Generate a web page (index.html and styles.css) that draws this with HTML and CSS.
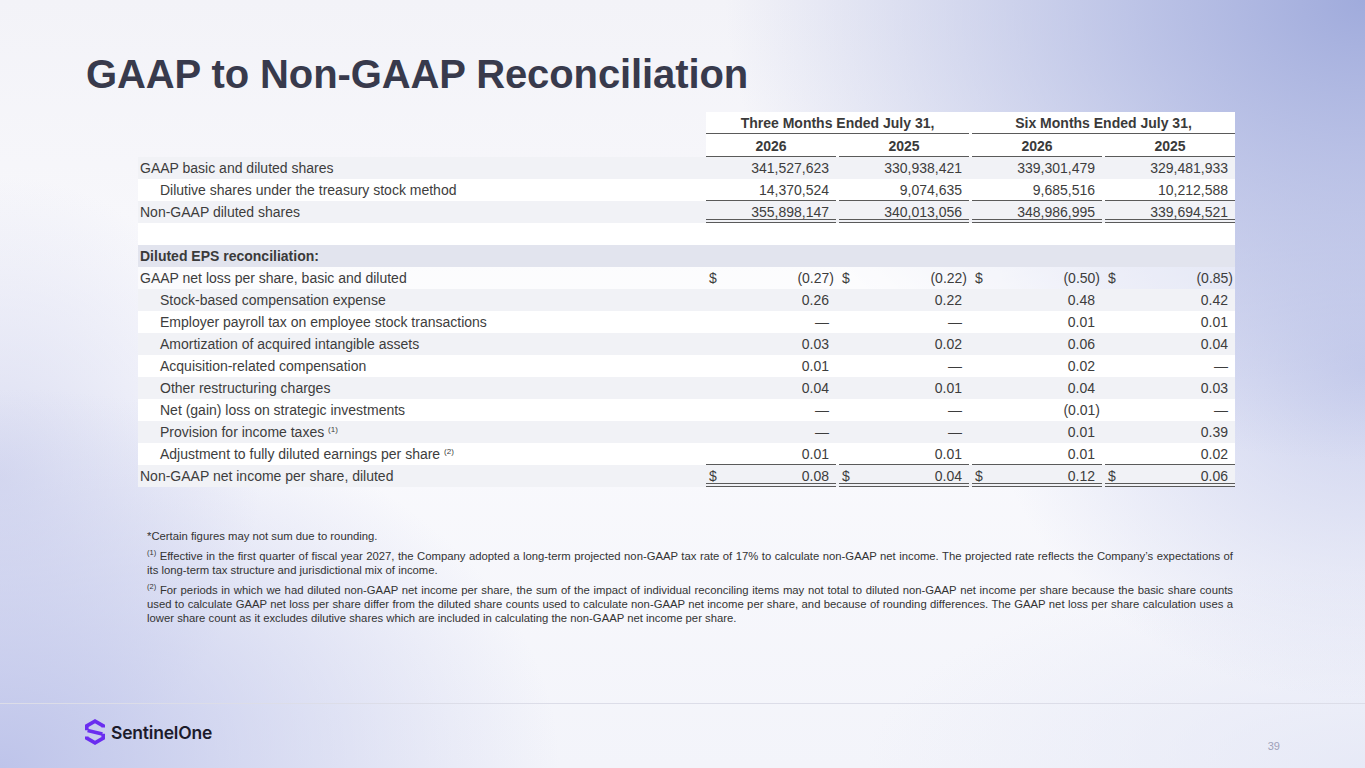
FILE: index.html
```html
<!DOCTYPE html>
<html>
<head>
<meta charset="utf-8">
<link rel="stylesheet" href="styles.css">
</head>
<body>
<div class="slide">
  <h1 class="title">GAAP to Non-GAAP Reconciliation</h1>
  <table class="recon">
    <colgroup>
      <col class="c-label"><col class="c-num"><col class="c-num"><col class="c-num"><col class="c-num">
    </colgroup>
    <tr class="hrow h1r">
      <td class="lbl-empty"></td>
      <td class="hcell first" colspan="2"><div class="hv line">Three Months Ended July 31,</div></td>
      <td class="hcell" colspan="2"><div class="hv line">Six Months Ended July 31,</div></td>
    </tr>
    <tr class="hrow h2r">
      <td class="lbl-empty"></td>
      <td class="hcell first"><div class="hv line">2026</div></td>
      <td class="hcell"><div class="hv line">2025</div></td>
      <td class="hcell"><div class="hv line">2026</div></td>
      <td class="hcell"><div class="hv line">2025</div></td>
    </tr>
    <tr class="r gray">
      <td class="lbl">GAAP basic and diluted shares</td>
      <td class="num"><div class="v">341,527,623</div></td>
      <td class="num"><div class="v">330,938,421</div></td>
      <td class="num"><div class="v">339,301,479</div></td>
      <td class="num"><div class="v">329,481,933</div></td>
    </tr>
    <tr class="r white">
      <td class="lbl ind">Dilutive shares under the treasury stock method</td>
      <td class="num"><div class="v line">14,370,524</div></td>
      <td class="num"><div class="v line">9,074,635</div></td>
      <td class="num"><div class="v line">9,685,516</div></td>
      <td class="num"><div class="v line">10,212,588</div></td>
    </tr>
    <tr class="r gray">
      <td class="lbl">Non-GAAP diluted shares</td>
      <td class="num"><div class="v dbl">355,898,147</div></td>
      <td class="num"><div class="v dbl">340,013,056</div></td>
      <td class="num"><div class="v dbl">348,986,995</div></td>
      <td class="num"><div class="v dbl">339,694,521</div></td>
    </tr>
    <tr class="r white">
      <td class="lbl"></td><td class="num"></td><td class="num"></td><td class="num"></td><td class="num"></td>
    </tr>
    <tr class="r section">
      <td class="lbl bold">Diluted EPS reconciliation:</td>
      <td class="num"></td><td class="num"></td><td class="num"></td><td class="num"></td>
    </tr>
    <tr class="r soft">
      <td class="lbl">GAAP net loss per share, basic and diluted</td>
      <td class="num"><div class="v cur"><span class="d">$</span><span class="p">(0.27)</span></div></td>
      <td class="num"><div class="v cur"><span class="d">$</span><span class="p">(0.22)</span></div></td>
      <td class="num"><div class="v cur"><span class="d">$</span><span class="p">(0.50)</span></div></td>
      <td class="num"><div class="v cur"><span class="d">$</span><span class="p">(0.85)</span></div></td>
    </tr>
    <tr class="r gray">
      <td class="lbl ind">Stock-based compensation expense</td>
      <td class="num"><div class="v">0.26</div></td>
      <td class="num"><div class="v">0.22</div></td>
      <td class="num"><div class="v">0.48</div></td>
      <td class="num"><div class="v">0.42</div></td>
    </tr>
    <tr class="r white">
      <td class="lbl ind">Employer payroll tax on employee stock transactions</td>
      <td class="num"><div class="v">—</div></td>
      <td class="num"><div class="v">—</div></td>
      <td class="num"><div class="v">0.01</div></td>
      <td class="num"><div class="v">0.01</div></td>
    </tr>
    <tr class="r gray">
      <td class="lbl ind">Amortization of acquired intangible assets</td>
      <td class="num"><div class="v">0.03</div></td>
      <td class="num"><div class="v">0.02</div></td>
      <td class="num"><div class="v">0.06</div></td>
      <td class="num"><div class="v">0.04</div></td>
    </tr>
    <tr class="r white">
      <td class="lbl ind">Acquisition-related compensation</td>
      <td class="num"><div class="v">0.01</div></td>
      <td class="num"><div class="v">—</div></td>
      <td class="num"><div class="v">0.02</div></td>
      <td class="num"><div class="v">—</div></td>
    </tr>
    <tr class="r gray">
      <td class="lbl ind">Other restructuring charges</td>
      <td class="num"><div class="v">0.04</div></td>
      <td class="num"><div class="v">0.01</div></td>
      <td class="num"><div class="v">0.04</div></td>
      <td class="num"><div class="v">0.03</div></td>
    </tr>
    <tr class="r white">
      <td class="lbl ind">Net (gain) loss on strategic investments</td>
      <td class="num"><div class="v">—</div></td>
      <td class="num"><div class="v">—</div></td>
      <td class="num"><div class="v"><span class="p">(0.01)</span></div></td>
      <td class="num"><div class="v">—</div></td>
    </tr>
    <tr class="r gray">
      <td class="lbl ind">Provision for income taxes <sup>(1)</sup></td>
      <td class="num"><div class="v">—</div></td>
      <td class="num"><div class="v">—</div></td>
      <td class="num"><div class="v">0.01</div></td>
      <td class="num"><div class="v">0.39</div></td>
    </tr>
    <tr class="r white">
      <td class="lbl ind">Adjustment to fully diluted earnings per share <sup>(2)</sup></td>
      <td class="num"><div class="v line">0.01</div></td>
      <td class="num"><div class="v line">0.01</div></td>
      <td class="num"><div class="v line">0.01</div></td>
      <td class="num"><div class="v line">0.02</div></td>
    </tr>
    <tr class="r gray">
      <td class="lbl">Non-GAAP net income per share, diluted</td>
      <td class="num"><div class="v cur dbl"><span class="d">$</span><span>0.08</span></div></td>
      <td class="num"><div class="v cur dbl"><span class="d">$</span><span>0.04</span></div></td>
      <td class="num"><div class="v cur dbl"><span class="d">$</span><span>0.12</span></div></td>
      <td class="num"><div class="v cur dbl"><span class="d">$</span><span>0.06</span></div></td>
    </tr>
  </table>

  <div class="notes">
    <p>*Certain figures may not sum due to rounding.</p>
    <p><span class="fn">(1)</span> Effective in the first quarter of fiscal year 2027, the Company adopted a long-term projected non-GAAP tax rate of 17% to calculate non-GAAP net income. The projected rate reflects the Company’s expectations of its long-term tax structure and jurisdictional mix of income.</p>
    <p><span class="fn">(2)</span> For periods in which we had diluted non-GAAP net income per share, the sum of the impact of individual reconciling items may not total to diluted non-GAAP net income per share because the basic share counts used to calculate GAAP net loss per share differ from the diluted share counts used to calculate non-GAAP net income per share, and because of rounding differences. The GAAP net loss per share calculation uses a lower share count as it excludes dilutive shares which are included in calculating the non-GAAP net income per share.</p>
  </div>

  <div class="footer">
    <div class="brand">
      <svg class="mark" viewBox="0 0 20 26" width="20" height="26" aria-hidden="true">
        <g fill="none" stroke="#6a2df0" stroke-width="3.6" stroke-linejoin="miter">
          <path d="M1.8 11.2 V6.9 L10 2.1 L18.2 6.9 V8.6"/>
          <path d="M2.6 11.6 L17.4 14.9"/>
          <path d="M18.2 14.8 V19.1 L10 23.9 L1.8 19.1 V17.4"/>
        </g>
      </svg>
      <span class="name">SentinelOne</span>
    </div>
    <div class="page">39</div>
  </div>
</div>
</body>
</html>
```
FILE: styles.css
```css
html, body {
  margin: 0;
  padding: 0;
}
body {
  width: 1365px;
  height: 768px;
  overflow: hidden;
  font-family: "Liberation Sans", Arial, sans-serif;
  background:
    radial-gradient(ellipse 640px 460px at 100% 0%, rgba(160,171,220,1) 0%, rgba(174,183,226,0.8) 35%, rgba(200,206,236,0) 100%),
    radial-gradient(ellipse 380px 330px at 100% 48%, rgba(198,204,236,0.9), rgba(205,210,238,0) 100%),
    radial-gradient(ellipse 560px 380px at 0% 100%, rgba(190,196,234,1), rgba(210,214,240,0) 100%),
    radial-gradient(ellipse 260px 300px at 0% 62%, rgba(214,217,240,0.9), rgba(220,222,242,0) 100%),
    radial-gradient(ellipse 500px 200px at 100% 100%, rgba(228,231,246,0.8), rgba(228,231,246,0) 100%),
    linear-gradient(180deg, #f3f3f8 0%, #fafafd 50%, #f3f4fa 100%);
}
.slide {
  height: 768px;
  display: flex;
  flex-direction: column;
  box-sizing: border-box;
  padding-top: 54px;
}
.title {
  margin: 0 0 0 86px;
  font-size: 40px;
  line-height: 40px;
  font-weight: bold;
  color: #383a4c;
  letter-spacing: -0.1px;
}
.recon {
  margin: 18px 0 0 138px;
  width: 1097px;
  border-collapse: separate;
  border-spacing: 0;
  table-layout: fixed;
  font-size: 14px;
  color: #3d3d3d;
}
.c-label { width: 565px; }
.c-num { width: 133px; }
.recon td {
  padding: 0;
  height: 22px;
  white-space: nowrap;
}
.h2r td { height: 23px; }
.hcell {
  background: #ffffff;
  padding-left: 3px !important;
}
.hcell.first { background-clip: content-box; }
.hv {
  height: 22px;
  line-height: 22px;
  text-align: center;
  font-weight: bold;
  color: #3a3a3a;
}
.line {
  background-image: linear-gradient(#5a5a5a, #5a5a5a);
  background-repeat: no-repeat;
  background-position: left bottom;
  background-size: 100% 1px;
}
.dbl {
  background-image: linear-gradient(#5a5a5a, #5a5a5a), linear-gradient(#5a5a5a, #5a5a5a);
  background-repeat: no-repeat, no-repeat;
  background-position: left bottom, left calc(100% - 3px);
  background-size: 100% 1px, 100% 1px;
}
.r.gray { background: #f1f2f6; }
.r.white { background: #ffffff; }
.r.section { background: #e2e4ee; }
.r.soft { background: rgba(255,255,255,0.55); }
.lbl {
  padding-left: 2px !important;
  line-height: 22px;
}
.lbl.ind { padding-left: 22px !important; }
.lbl.bold { font-weight: bold; color: #3a3a3a; }
.lbl sup {
  font-size: 8px;
  vertical-align: 5px;
  line-height: 0;
}
.num {
  padding-left: 3px !important;
}
.v {
  height: 22px;
  line-height: 22px;
  text-align: right;
  padding-right: 7px;
  box-sizing: border-box;
}
.v .p { margin-right: -5px; }
.v.cur {
  display: flex;
  justify-content: space-between;
  padding-left: 3px;
}
.notes {
  margin: 42px 0 0 147px;
  width: 1086px;
  font-size: 11.3px;
  line-height: 14px;
  color: #333333;
  text-align: justify;
}
.notes p { margin: 0 0 6px 0; }
.fn {
  display: inline-block;
  font-size: 7.5px;
  line-height: 8px;
  vertical-align: top;
}
.footer {
  margin-top: auto;
  height: 65px;
  box-sizing: border-box;
  border-top: 1px solid #dcdde8;
  display: flex;
  justify-content: space-between;
  padding: 14px 85px 0 85px;
}
.brand {
  display: flex;
  align-items: center;
  height: 28px;
  gap: 6px;
}
.mark { display: block; }
.name {
  font-family: Inter, "Liberation Sans", sans-serif;
  font-weight: 600;
  font-size: 17.5px;
  letter-spacing: -0.2px;
  color: #1c1b2b;
}
.page {
  align-self: flex-end;
  margin-bottom: 16px;
  font-size: 11px;
  color: #9ea1b8;
}
```
